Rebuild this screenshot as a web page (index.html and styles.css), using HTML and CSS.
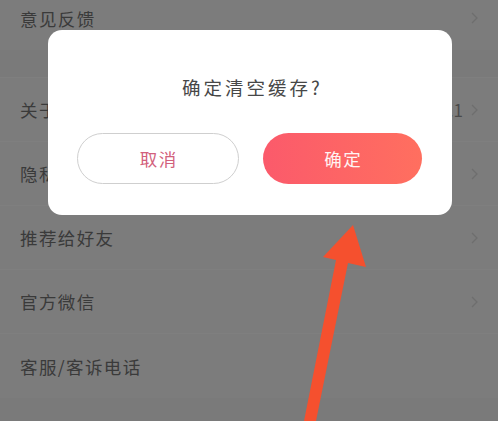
FILE: index.html
```html
<!DOCTYPE html>
<html lang="zh-CN">
<head>
<meta charset="utf-8">
<title>设置</title>
<link rel="stylesheet" href="styles.css">
</head>
<body>
<div class="screen">
  <ul class="list">
    <li class="row row-first"><span class="label">意见反馈</span><svg class="chev" viewBox="0 0 7 12"><path d="M1 1 L6 6 L1 11"/></svg></li>
    <li class="group-gap"></li>
    <li class="row"><span class="label">关于我们</span><span class="ver">V1.1.1</span><svg class="chev" viewBox="0 0 7 12"><path d="M1 1 L6 6 L1 11"/></svg></li>
    <li class="row"><span class="label">隐私政策</span><svg class="chev" viewBox="0 0 7 12"><path d="M1 1 L6 6 L1 11"/></svg></li>
    <li class="row"><span class="label">推荐给好友</span><svg class="chev" viewBox="0 0 7 12"><path d="M1 1 L6 6 L1 11"/></svg></li>
    <li class="row"><span class="label">官方微信</span><svg class="chev" viewBox="0 0 7 12"><path d="M1 1 L6 6 L1 11"/></svg></li>
    <li class="row row-last"><span class="label">客服/客诉电话</span></li>
  </ul>
  <div class="tail"></div>

  <div class="dialog">
    <p class="dialog-title">确定清空缓存?</p>
    <div class="dialog-actions">
      <button class="btn btn-cancel">取消</button>
      <button class="btn btn-ok">确定</button>
    </div>
  </div>

  <svg class="arrow" viewBox="0 0 498 421" width="498" height="421">
    <polygon points="353,225 366,267 348,263 316,421 304,421 336,260 323,257"/>
  </svg>
</div>
</body>
</html>
```

FILE: styles.css
```css
* { box-sizing: border-box; }
html, body {
  margin: 0;
  padding: 0;
  background: #7c7c7c;
}
body {
  font-family: "Noto Sans CJK SC", "Noto Sans", sans-serif;
  overflow: hidden;
}
.screen {
  position: relative;
  width: 498px;
  height: 421px;
  overflow: hidden;
  background: #7c7c7c;
}
.list {
  list-style: none;
  margin: -14px 0 0 0;
  padding: 0;
}
.row {
  display: flex;
  align-items: center;
  height: 64px;
  padding: 0 20px;
  border-bottom: 1px solid #7f7f7f;
}
.row-first { border-bottom: none; }
.row-last { border-bottom: none; }
.label {
  flex: 1;
  font-size: 17.5px;
  letter-spacing: 1.4px;
  color: #3a3a3a;
}
.ver {
  font-size: 17px;
  color: #4a4a4a;
  margin-right: 8px;
}
.chev {
  width: 7px;
  height: 12px;
  fill: none;
  stroke: #6e6e6e;
  stroke-width: 1.3;
}
.group-gap {
  height: 28px;
  background: #7a7a7a;
  border-bottom: 1px solid #7f7f7f;
}
.tail {
  height: 30px;
  background: #7a7a7a;
}
.dialog {
  position: absolute;
  left: 48px;
  top: 30px;
  width: 404px;
  height: 185px;
  background: #ffffff;
  border-radius: 14px;
  display: flex;
  flex-direction: column;
  padding: 43px 30px 0 29px;
}
.dialog-title {
  margin: 0;
  text-align: center;
  font-size: 18.5px;
  line-height: 28px;
  letter-spacing: 3px;
  color: #474747;
  padding-left: 6px;
}
.dialog-actions {
  display: flex;
  gap: 24px;
  margin-top: 32px;
}
.btn {
  flex: 1;
  height: 51px;
  border-radius: 26px;
  font-family: "Noto Sans CJK SC", "Noto Sans", sans-serif;
  font-size: 17.5px;
  letter-spacing: 1.5px;
  padding: 0 0 0 2px;
  cursor: pointer;
}
.btn-cancel {
  background: #ffffff;
  border: 1px solid #cfcfcf;
  color: #d2607c;
}
.btn-ok {
  border: none;
  background: linear-gradient(90deg, #fb5a6b 0%, #ff6f5f 100%);
  color: #fff3f3;
}
.arrow {
  position: absolute;
  left: 0;
  top: 0;
  pointer-events: none;
  fill: #f5502e;
}
```
